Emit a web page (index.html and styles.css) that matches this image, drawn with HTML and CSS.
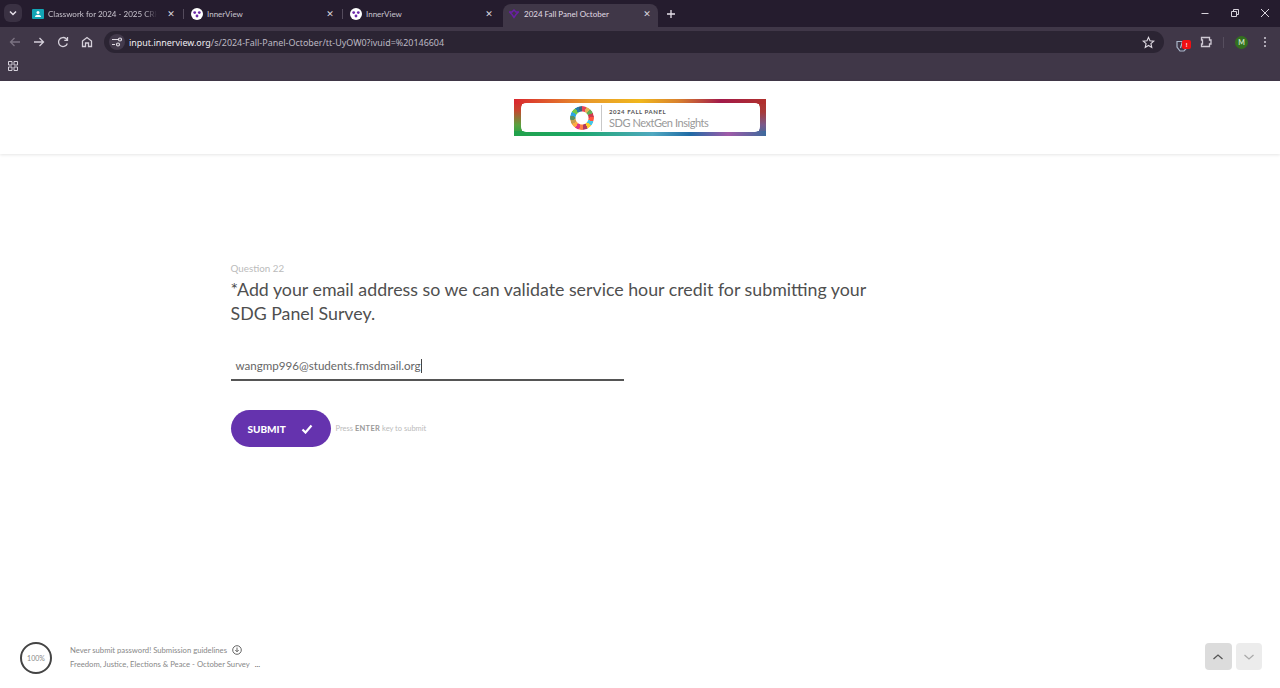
FILE: index.html
```html
<!DOCTYPE html>
<html lang="en">
<head>
<meta charset="utf-8">
<title>2024 Fall Panel October</title>
<link rel="stylesheet" href="styles.css">
</head>
<body>
<div class="browser">
  <div class="tabstrip">
    <div class="tab-search"><svg width="10" height="10" viewBox="0 0 10 10"><path d="M2 3.5 5 6.5 8 3.5" fill="none" stroke="#e6e1ea" stroke-width="1.5"/></svg></div>
    <div class="tab tab-first">
      <svg class="fav" width="12" height="10" viewBox="0 0 12 10"><rect width="12" height="10" rx="1" fill="#12a5b5"/><circle cx="6" cy="3.6" r="1.5" fill="#fff"/><path d="M3 8c0-3 6-3 6 0z" fill="#fff"/></svg>
      <span class="tab-title">Classwork for 2024 - 2025 CRHS</span>
      <span class="tab-x">✕</span>
    </div>
    <div class="sep"></div>
    <div class="tab">
      <svg class="fav" width="12" height="12" viewBox="0 0 12 12"><circle cx="6" cy="6" r="6" fill="#fff"/><circle cx="3.7" cy="4.6" r="1.4" fill="#6b2aa8"/><circle cx="8.3" cy="4.6" r="1.4" fill="#6b2aa8"/><circle cx="6" cy="8" r="1.4" fill="#6b2aa8"/></svg>
      <span class="tab-title">InnerView</span>
      <span class="tab-x">✕</span>
    </div>
    <div class="sep"></div>
    <div class="tab">
      <svg class="fav" width="12" height="12" viewBox="0 0 12 12"><circle cx="6" cy="6" r="6" fill="#fff"/><circle cx="3.7" cy="4.6" r="1.4" fill="#6b2aa8"/><circle cx="8.3" cy="4.6" r="1.4" fill="#6b2aa8"/><circle cx="6" cy="8" r="1.4" fill="#6b2aa8"/></svg>
      <span class="tab-title">InnerView</span>
      <span class="tab-x">✕</span>
    </div>
    <div class="tab tab-active">
      <svg class="fav" width="10" height="10" viewBox="0 0 10 10"><path d="M5 1 7 3 9.500 3 7 5.500 5 8.500 3 5.500 .5 3 3 3Z" fill="none" stroke="#6a1fa5" stroke-width="1.4"/></svg>
      <span class="tab-title">2024 Fall Panel October</span>
      <span class="tab-x">✕</span>
    </div>
    <svg class="newtab" width="10" height="10" viewBox="0 0 10 10"><path d="M5 1v8M1 5h8" stroke="#e6e1ea" stroke-width="1.3"/></svg>
    <div class="win-controls">
      <svg width="10" height="10" viewBox="0 0 10 10"><path d="M1.500 5.500h7" stroke="#d8d3dc"/></svg>
      <svg width="10" height="10" viewBox="0 0 10 10"><path d="M1.500 3.500h5v5h-5zM3.500 3.500v-2h5v5h-2" fill="none" stroke="#d8d3dc"/></svg>
      <svg width="10" height="10" viewBox="0 0 10 10"><path d="M1 1l8 8M9 1l-8 8" stroke="#d8d3dc"/></svg>
    </div>
  </div>
  <div class="toolbar">
    <svg class="nav" width="14" height="14" viewBox="0 0 14 14"><path d="M12 7H2.500M6.500 3 2.500 7l4 4" fill="none" stroke="#7b7382" stroke-width="1.300"/></svg>
    <svg class="nav" width="14" height="14" viewBox="0 0 14 14"><path d="M2 7h9.500M7.500 3l4 4-4 4" fill="none" stroke="#d5d0da" stroke-width="1.300"/></svg>
    <svg class="nav" width="14" height="14" viewBox="0 0 14 14"><path d="M11.300 8.500A4.500 4.500 0 1 1 10.200 3.800L11.500 5.200M11.500 2v3.300H8.300" fill="none" stroke="#d5d0da" stroke-width="1.300"/></svg>
    <svg class="nav" width="14" height="14" viewBox="0 0 14 14"><path d="M2.500 6 7 2.500 11.500 6v5.500H8.500V8h-3v3.500H2.500Z" fill="none" stroke="#d5d0da" stroke-width="1.300"/></svg>
    <div class="omnibox">
      <span class="site-info"><svg width="12" height="12" viewBox="0 0 12 12"><path d="M1 3.500h6M1 8.500h3" stroke="#e0dbe4" stroke-width="1.200"/><circle cx="9" cy="3.500" r="1.500" fill="none" stroke="#e0dbe4" stroke-width="1.200"/><circle cx="7" cy="8.500" r="1.500" fill="none" stroke="#e0dbe4" stroke-width="1.200"/></svg></span>
      <span class="url"><span class="url-host">input.innerview.org</span>/s/2024-Fall-Panel-October/tt-UyOW0?ivuid=%20146604</span>
      <svg class="star" width="13" height="13" viewBox="0 0 14 14"><path d="M7 1.500 8.600 5.200l4 .4-3 2.700.9 4-3.500-2.100-3.500 2.100.9-4-3-2.700 4-.4Z" fill="none" stroke="#e0dbe4" stroke-width="1.200"/></svg>
    </div>
    <div class="ext-badge">
      <svg width="13" height="12" viewBox="0 0 13 12"><path d="M1 1.500h11v5L8 11H4L1 7ZM6.500 1.500 4.500 8" fill="none" stroke="#a9b6c9" stroke-width="1.200"/></svg>
      <span class="badge">!</span>
    </div>
    <svg class="puzzle" width="14" height="14" viewBox="0 0 14 14"><path d="M2.500 2.500h8v2.500h1.500v4H10.500v2.500h-8V9h1V5h-1Z" fill="none" stroke="#cfc9d4" stroke-width="1.300"/></svg>
    <div class="tool-sep"></div>
    <div class="avatar">M</div>
    <div class="dots"><i></i><i></i><i></i></div>
  </div>
  <div class="bookmarks">
    <svg width="10" height="10" viewBox="0 0 10 10"><path d="M.5.500h3.500v3.500H.5zM6 .5h3.500v3.500H6zM.5 6h3.500v3.500H.5zM6 6h3.500v3.500H6z" fill="none" stroke="#d5d0da"/></svg>
  </div>
</div>
<div class="page">
  <header class="page-head">
    <div class="banner">
      <div class="banner-inner">
        <div class="ring"></div>
        <div class="banner-rule"></div>
        <div class="banner-text">
          <div class="banner-top">2024 FALL PANEL</div>
          <div class="banner-sub">SDG NextGen Insights</div>
        </div>
      </div>
    </div>
  </header>
  <main class="question">
    <div class="q-label">Question 22</div>
    <h1 class="q-title">*Add your email address so we can validate service hour credit for submitting your SDG Panel Survey.</h1>
    <div class="q-input"><span>wangmp996@students.fmsdmail.org</span><i class="caret"></i></div>
    <div class="actions">
      <div class="submit">
        <span>SUBMIT</span>
        <svg width="12" height="10" viewBox="0 0 12 10"><path d="M1.500 5.500 4.500 8.500 10.500 1.500" fill="none" stroke="#fff" stroke-width="2.200"/></svg>
      </div>
      <div class="hint">Press <b>ENTER</b> key to submit</div>
    </div>
  </main>
  <footer class="page-foot">
    <div class="progress">100%</div>
    <div class="foot-text">
      <div class="foot-line">Never submit password! Submission guidelines
        <svg width="10" height="10" viewBox="0 0 10 10"><circle cx="5" cy="5" r="4.300" fill="none" stroke="#555" stroke-width=".9"/><path d="M5 2.500v4M3.300 5 5 6.800 6.700 5" fill="none" stroke="#555" stroke-width=".9"/></svg>
      </div>
      <div class="foot-line">Freedom, Justice, Elections &amp; Peace - October Survey <span class="more">...</span></div>
    </div>
    <div class="pager">
      <div class="pg pg-up"><svg width="12" height="8" viewBox="0 0 12 8"><path d="M1.500 6 6 2l4.500 4" fill="none" stroke="#555" stroke-width="1.300"/></svg></div>
      <div class="pg pg-down"><svg width="12" height="8" viewBox="0 0 12 8"><path d="M1.500 2 6 6l4.500-4" fill="none" stroke="#aaa" stroke-width="1.300"/></svg></div>
    </div>
  </footer>
</div>
</body>
</html>
```

FILE: styles.css
```css
* { box-sizing: border-box; }
html, body { margin: 0; height: 100%; }
body {
  width: 1280px;
  height: 688px;
  overflow: hidden;
  display: flex;
  flex-direction: column;
  background: #fff;
  font-family: "Lato", "Noto Sans", sans-serif;
}
.browser { flex: none; height: 81px; background: #403748; }

.tabstrip {
  height: 27px;
  background: #251c2e;
  display: flex;
  align-items: flex-start;
  padding: 4px 0 0 4px;
  color: #d8d3dc;
}
.tab-search {
  width: 18px;
  height: 18px;
  border-radius: 6px;
  background: #3a3143;
  display: flex;
  align-items: center;
  justify-content: center;
  margin-right: 3px;
}
.tab {
  width: 158px;
  height: 23px;
  padding: 0 2px 3px 7px;
  display: flex;
  align-items: center;
  gap: 4px;
  font-size: 8px;
}
.fav { flex: none; }
.tab-title { flex: 1; white-space: nowrap; overflow: hidden; min-width: 0; color: #c9c4ce; }
.tab-first .tab-title {
  -webkit-mask-image: linear-gradient(90deg, #000 88%, transparent 100%);
  mask-image: linear-gradient(90deg, #000 88%, transparent 100%);
}
.tab-x { flex: none; width: 20px; font-size: 9px; text-align: center; color: #d8d3dc; font-family: "DejaVu Sans", sans-serif; }
.sep { flex: none; width: 1px; height: 10px; margin-top: 5px; background: #544b5c; }
.tab-active {
  width: 155px;
  margin-left: 2px;
  background: #403748;
  border-radius: 8px 8px 0 0;
  padding: 0 1px 3px 6px;
  gap: 5px;
}
.tab-active .tab-title { color: #e0dce4; }
.newtab { margin: 5px 0 0 8px; }
.win-controls {
  margin-left: auto;
  display: flex;
  gap: 20px;
  padding: 4px 10px 0 0;
}

.toolbar {
  height: 27px;
  display: flex;
  align-items: center;
  padding: 3px 9px 0 8px;
}
.nav { flex: none; margin-right: 10px; }
.omnibox {
  flex: none;
  width: 1060px;
  height: 22px;
  border-radius: 11px;
  background: #2b2433;
  display: flex;
  align-items: center;
  padding: 0 9px 0 5px;
  font-size: 8.950px;
  font-family: "Noto Sans", sans-serif;
  color: #bdb8c2;
}
.site-info {
  width: 16px;
  height: 16px;
  border-radius: 8px;
  background: #433a4c;
  display: flex;
  align-items: center;
  justify-content: center;
  margin-right: 4px;
}
.url { flex: 1; white-space: nowrap; }
.url-host { color: #f0edf2; }
.ext-badge { position: relative; margin-left: 12px; width: 13px; height: 12px; }
.badge {
  position: absolute;
  left: 6px;
  top: 4px;
  width: 9px;
  height: 9px;
  border-radius: 2px;
  background: #f10f12;
  color: #fff;
  font-size: 6px;
  line-height: 9px;
  text-align: center;
  font-weight: 700;
}
.puzzle { margin-left: 10px; flex: none; }
.tool-sep { width: 1px; height: 11px; background: #564e5e; margin-left: 10px; }
.avatar {
  width: 13px;
  height: 13px;
  margin-left: 11px;
  border-radius: 50%;
  background: #33701f;
  color: #cfe0c6;
  font-size: 7px;
  font-weight: 700;
  line-height: 13px;
  text-align: center;
}
.dots { margin-left: 16px; display: flex; flex-direction: column; gap: 2px; }
.dots i { width: 2px; height: 2px; background: #d5d0da; border-radius: 50%; display: block; }

.bookmarks { height: 27px; padding: 0 0 3px 8px; display: flex; align-items: center; }

.page { flex: 1; min-height: 0; display: flex; flex-direction: column; }
.page-head {
  flex: none;
  height: 73px;
  display: flex;
  align-items: flex-start;
  justify-content: center;
  padding-top: 18px;
  box-shadow: 0 1px 3px rgba(0,0,0,.1);
}
.banner {
  width: 252px;
  height: 37px;
  padding: 4px 6px 4px 7px;
  background:
    linear-gradient(90deg, #d9272e 0%, #e89a2a 30%, #f0b71c 50%, #d9822e 65%, #a21a4a 82%, #b0302c 100%) top / 100% 5px no-repeat,
    linear-gradient(90deg, #22a14a 0%, #1aa86a 25%, #4fa8c0 55%, #1f6aa5 70%, #a05aa8 85%, #3d6a9c 100%) bottom / 100% 5px no-repeat,
    linear-gradient(180deg, #d9272e 0%, #c8442e 30%, #5aa13e 70%, #22a14a 100%) left / 8px 100% no-repeat,
    linear-gradient(180deg, #b0302c 0%, #a83a3a 35%, #7a5a8c 70%, #3d6a9c 100%) right / 7px 100% no-repeat;
}
.banner-inner {
  height: 100%;
  background: #fff;
  border-radius: 5px;
  display: flex;
  align-items: center;
  padding-left: 49px;
}
.ring {
  width: 24px;
  height: 24px;
  border-radius: 50%;
  background: conic-gradient(#e5243b 0 6%, #dda63a 6% 12%, #4c9f38 12% 18%, #c5192d 18% 24%, #ff3a21 24% 30%, #26bde2 30% 36%, #fcc30b 36% 42%, #a21942 42% 48%, #fd6925 48% 54%, #dd1367 54% 60%, #fd9d24 60% 66%, #bf8b2e 66% 72%, #3f7e44 72% 78%, #0a97d9 78% 84%, #56c02b 84% 90%, #00689d 90% 95%, #19486a 95% 100%);
  -webkit-mask: radial-gradient(circle, transparent 6px, #000 7px);
  mask: radial-gradient(circle, transparent 6px, #000 7px);
  opacity: .85;
}
.banner-rule { width: 1px; height: 26px; background: #c8c8c8; margin-left: 7px; }
.banner-text { margin-left: 7px; padding-top: 2px; }
.banner-top { font-size: 6px; line-height: 8px; font-weight: 700; letter-spacing: .55px; color: #555; }
.banner-sub { font-size: 11px; line-height: 13px; color: #999; letter-spacing: -.45px; }

.question { flex: none; padding: 106px 0 0 230.500px; }
.q-label { font-size: 9.800px; line-height: 16px; color: #bbb; }
.q-title {
  width: 660px;
  margin: 0;
  padding-top: 1px;
  font-size: 17.800px;
  line-height: 24px;
  font-weight: 400;
  color: #4f4f4f;
}
.q-input {
  width: 393px;
  height: 31px;
  margin-top: 25px;
  padding: 2px 0 0 5px;
  border-bottom: 2px solid #555;
  display: flex;
  align-items: center;
  font-size: 11.600px;
  color: #666;
}
.caret { width: 1px; height: 14px; background: #444; }
.actions { margin-top: 29px; display: flex; align-items: center; }
.submit {
  width: 100px;
  height: 37px;
  border-radius: 19px;
  background: #6533ae;
  color: #fff;
  display: flex;
  align-items: center;
  gap: 15px;
  padding-left: 17px;
  font-size: 10px;
  font-weight: 900;
}
.hint { margin-left: 5px; font-size: 7.500px; color: #bbb; }
.hint b { color: #999; letter-spacing: .3px; }

.page-foot {
  margin-top: auto;
  height: 58px;
  display: flex;
  align-items: center;
  padding: 0 18px 3px 20px;
}
.progress {
  width: 32px;
  height: 32px;
  border: 2.500px solid #444;
  border-radius: 50%;
  display: flex;
  align-items: center;
  justify-content: center;
  font-size: 7px;
  color: #888;
}
.foot-text { margin: 0 0 2px 18px; font-size: 7.700px; color: #888; }
.foot-line { height: 14px; line-height: 14px; display: flex; align-items: center; gap: 5px; }
.more { color: #555; }
.pager { margin-left: auto; display: flex; gap: 4px; margin-bottom: 2px; }
.pg {
  width: 26.500px;
  height: 27px;
  border-radius: 4px;
  display: flex;
  align-items: center;
  justify-content: center;
}
.pg-up { background: #dcdcdc; }
.pg-down { background: #ececec; }
```
